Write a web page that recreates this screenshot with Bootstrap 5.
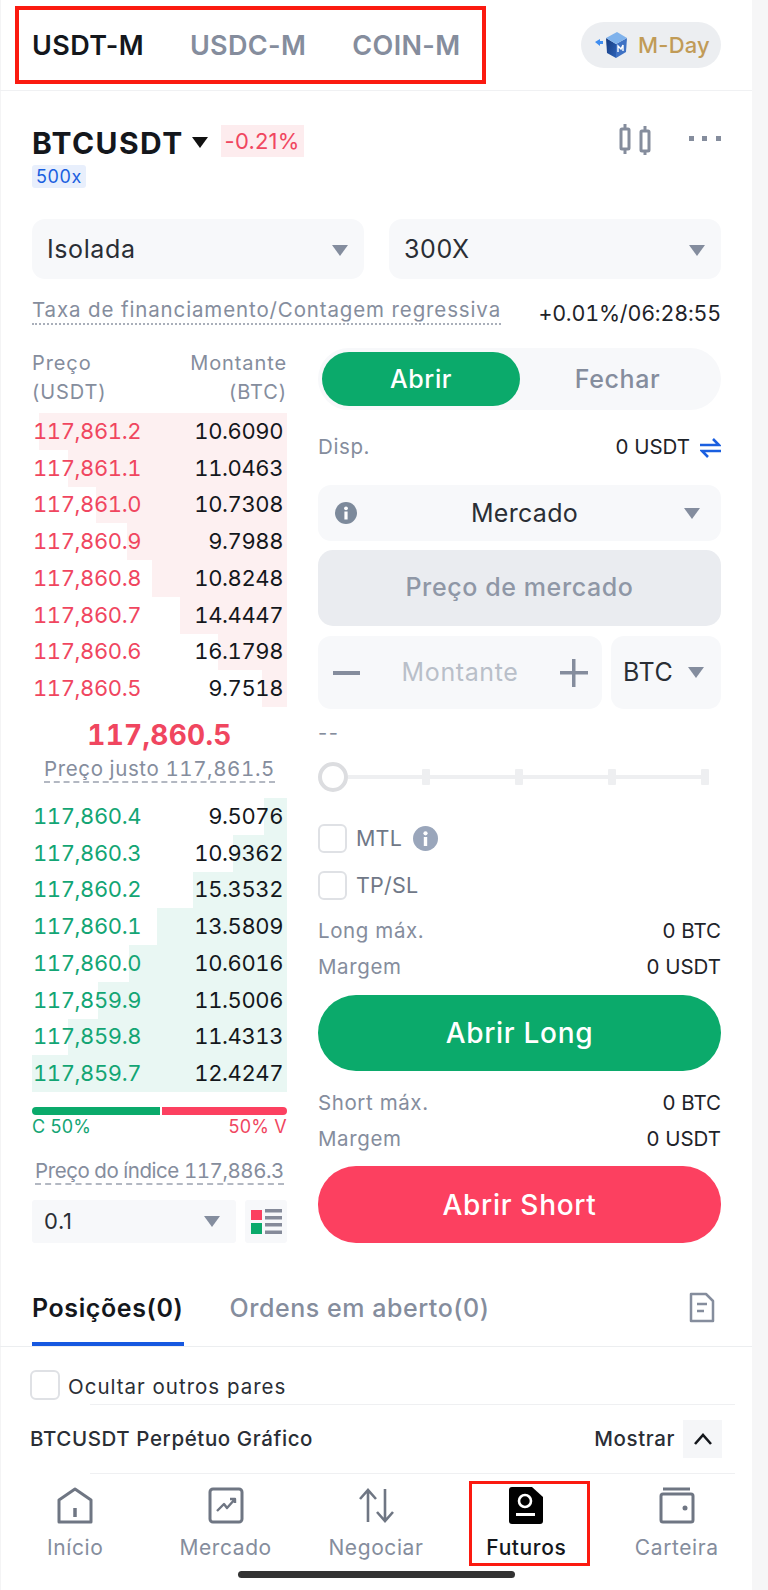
<!DOCTYPE html>
<html lang="pt">
<head>
  <meta charset="UTF-8" />
  <meta name="viewport" content="width=device-width, initial-scale=1.0"/>
  <title>Futuros</title>
  <link href="https://cdn.jsdelivr.net/npm/bootstrap@5.3.3/dist/css/bootstrap.min.css" rel="stylesheet">
  <style>
    body { background: #f6f6f7; font-family: Inter, "Noto Sans", sans-serif; color: #1e2329; margin: 0; letter-spacing: .6px; }
    .shell { width: 752px; height: 1590px; background: #fff; overflow: hidden; box-shadow: inset 1px 0 #f4f4f5; }

    .top-bar { height: 91px; border-bottom: 1px solid #f0f1f3; padding: 6px 31px 0 15px; }
    .tab-box { width: 471px; height: 78px; border: 4px solid #fb1a10; padding: 2px 0 0 13px; gap: 46px; font-size: 27px; font-weight: 600; color: #858d9d; letter-spacing: .35px; }
    .tab-box .on { color: #14171c; }
    .mday { width: 140px; height: 46px; margin-top: 16px; border-radius: 23px; background: #eceef1; color: #c19b57; font-size: 22px; font-weight: 500; padding-left: 13px; gap: 9px; letter-spacing: .2px; }

    .pad { padding: 0 31px 0 32px; }
    .sym-row { margin-top: 32px; height: 32px; }
    .sym-name { font-size: 30px; font-weight: 700; color: #14171c; letter-spacing: 1.4px; line-height: 32px; margin-top: 4px; }
    .chg { height: 32px; padding: 0 4px; margin-left: 13px; background: #fdecee; color: #f0465f; font-size: 22px; line-height: 32px; letter-spacing: .2px; }
    .lev { display: inline-block; height: 23px; margin-top: 10px; padding: 0 4px; border-radius: 3px; background: #e8effc; color: #1a5fe0; font-size: 18px; line-height: 23px; vertical-align: top; }
    .tri { display: inline-block; width: 0; height: 0; border-left: 8.5px solid transparent; border-right: 8.5px solid transparent; border-top: 11px solid #848d9e; flex: none; }
    .tri-dark { border-top-color: #111; margin-left: 8px; margin-top: 2px; }

    .field { background: #f7f8fa; border-radius: 13px; color: #2a2e35; font-size: 25px; }
    .sel-row { margin-top: 31px; gap: 25px; }
    .sel-row .field { flex: 1; height: 60px; padding: 2px 16px 0 15px; }
    .fund-row { margin-top: 18px; height: 34px; }
    .fund-lbl { color: #858d9d; border-bottom: 2px dotted #a9afba; line-height: 26px; height: 28px; margin-bottom: 6px; font-size: 20.5px; letter-spacing: .87px; }
    .fund-val { font-size: 21.5px; color: #1e2329; letter-spacing: -.2px; font-variant-numeric: tabular-nums; }

    .main-row { margin-top: 17px; gap: 31px; }
    .book { width: 255px; flex: none; }
    .book-head { height: 65px; padding-top: 1px; color: #858d9d; font-size: 20px; line-height: 29px; letter-spacing: .9px; }
    .lvl { height: 36.75px; padding: 0 4px 0 1px; font-size: 22px; letter-spacing: -.4px; font-variant-numeric: tabular-nums; background-repeat: no-repeat; background-position: right top; }
    .ask { color: #f0465f; background-image: linear-gradient(#fdf0f1, #fdf0f1); }
    .bid { color: #13a574; background-image: linear-gradient(#e9f7f3, #e9f7f3); }
    .lvl span:last-child { color: #14171c; }
    .mid-px { margin-top: 10px; height: 36px; line-height: 36px; font-size: 28px; font-weight: 700; color: #f0465f; text-align: center; letter-spacing: .3px; font-variant-numeric: tabular-nums; }
    .dash { color: #858d9d; font-size: 20.5px; line-height: 24px; height: 26px; border-bottom: 2px dashed #b3b8c2; white-space: nowrap; font-variant-numeric: tabular-nums; }
    .split-bar { margin-top: 15px; gap: 2px; height: 8px; }
    .split-bar div { height: 8px; }
    .split-bar .gr { width: 128px; background: #0baa6b; border-radius: 4px 0 0 4px; }
    .split-bar .rd { flex: 1; background: #fc4060; border-radius: 0 4px 4px 0; }
    .split-txt { height: 22px; line-height: 24px; font-size: 18px; letter-spacing: .2px; }
    .step-row { margin-top: 15px; gap: 9px; height: 43px; }
    .step-row .field { border-radius: 3px; font-size: 22px; }

    .trade { width: 403px; flex: none; }
    .toggle { height: 62px; border-radius: 31px; background: #f7f8fa; padding: 4px 0 4px 4px; font-size: 25px; font-weight: 500; color: #858d9d; }
    .toggle .opt { width: 198px; height: 54px; border-radius: 27px; background: #0baa6b; color: #fff; padding-top: 2px; }
    .kv { height: 32px; font-size: 20.5px; color: #858d9d; }
    .kv span:last-child { color: #1e2329; letter-spacing: 0; }
    .chk { width: 29px; height: 29px; border: 2.5px solid #dfe1e5; border-radius: 6px; background: #fff; flex: none; }
    .chk-lbl { font-size: 21.5px; color: #707887; margin-left: 9px; letter-spacing: .2px; }
    .big-btn { width: 100%; height: 76px; border-radius: 38px; border: 0; color: #fff; font-size: 28px; font-weight: 500; letter-spacing: .7px; }
    .slider { margin-top: 16px; height: 30px; }
    .knob { width: 30px; height: 30px; border: 4px solid #dcdde0; border-radius: 50%; background: #fff; flex: none; }
    .rail { width: 361px; height: 4px; background: #eeeff1; }
    .tick { width: 8px; height: 16px; background: #eeeff1; border-radius: 1px; }

    .pos-tabs { margin-top: 29px; height: 75px; border-bottom: 1px solid #eceef0; padding: 0 31px 0 32px; font-size: 25px; }
    .pos-tab { height: 74px; padding-top: 4px; border-bottom: 4px solid transparent; color: #858d9d; font-weight: 500; letter-spacing: .55px; }
    .pos-tab.on { color: #14171c; font-weight: 600; border-bottom-color: #1658e0; margin-right: 46px; letter-spacing: .6px; }
    .thin { height: 1px; background: #eff0f2; margin-left: 90px; width: 645px; }
    .chart-row { height: 68px; padding: 0 30px 0 30px; font-size: 20.5px; font-weight: 500; color: #2a2e35; }
    .chev { width: 39px; height: 38px; background: #f5f6f8; margin-left: 8px; }

    .tabbar { padding-top: 7px; height: 92px; }
    .tb-item { width: 20%; }
    .tb-inner { height: 85px; padding-top: 3px; font-size: 21px; color: #858d9d; border: 3px solid transparent; line-height: 1; }
    .tb-inner svg { display: block; margin-bottom: 13px; }
    .tb-inner.on { width: 121px; margin-left: 6px; padding-right: 6px; border-color: #fb1a10; color: #14171c; font-weight: 500; }
    .grabber { width: 277px; height: 7px; margin: 5px auto 0; border-radius: 4px; background: #333; }
  </style>
</head>
<body>
<div class="shell">

  <div class="top-bar d-flex justify-content-between">
    <div class="tab-box d-flex align-items-center">
      <span class="on">USDT-M</span><span>USDC-M</span><span>COIN-M</span>
    </div>
    <div class="mday d-flex align-items-center">
      <svg width="35" height="32" viewBox="0 0 35 32">
        <defs><linearGradient id="cb" x1="0" y1="0" x2="1" y2="1"><stop offset="0" stop-color="#173a7c"/><stop offset="1" stop-color="#2c62b8"/></linearGradient></defs>
        <path d="M1 13l5-3v2h3v3H6v2z" fill="#3f8df0"/>
        <path d="M12 9l10 6v14l-9-5z" fill="url(#cb)"/>
        <path d="M22 15l11-6-1 14-10 6z" fill="#3f72c4"/>
        <path d="M12 9l11-6 10 6-11 6z" fill="#7fb2ec"/>
        <path d="M24 23v-6l3 3 2-4v6" fill="none" stroke="#fff" stroke-width="1.4"/>
      </svg>
      <span>M-Day</span>
    </div>
  </div>

  <div class="pad">
    <div class="sym-row d-flex align-items-start justify-content-between">
      <div class="d-flex align-items-center">
        <span class="sym-name">BTCUSDT</span>
        <span class="tri tri-dark"></span>
        <span class="chg">-0.21%</span>
      </div>
      <div class="d-flex align-items-center" style="gap:36px">
        <svg width="34" height="32" viewBox="0 0 34 32" fill="none" stroke="#858d9d" stroke-width="3">
          <rect x="2" y="6" width="8" height="20" rx="1"/><path d="M6 1v5M6 26v5"/>
          <rect x="22" y="8" width="8" height="20" rx="1"/><path d="M26 3v5M26 28v4"/>
        </svg>
        <svg width="32" height="6" viewBox="0 0 32 6" fill="#858d9d"><rect width="5" height="5"/><rect x="13" width="5" height="5"/><rect x="27" width="5" height="5"/></svg>
      </div>
    </div>
    <span class="lev">500x</span>

    <div class="sel-row d-flex">
      <div class="field d-flex align-items-center justify-content-between">Isolada <span class="tri"></span></div>
      <div class="field d-flex align-items-center justify-content-between">300X <span class="tri"></span></div>
    </div>

    <div class="fund-row d-flex justify-content-between align-items-start">
      <span class="fund-lbl">Taxa de financiamento/Contagem regressiva</span>
      <span class="fund-val">+0.01%/06:28:55</span>
    </div>

    <div class="main-row d-flex">
      <div class="book">
        <div class="book-head d-flex justify-content-between">
          <div>Preço<br>(USDT)</div>
          <div class="text-end">Montante<br>(BTC)</div>
        </div>

        <div class="lvl ask d-flex justify-content-between align-items-center" style="background-size:248px 100%"><span>117,861.2</span><span>10.6090</span></div>
        <div class="lvl ask d-flex justify-content-between align-items-center" style="background-size:219px 100%"><span>117,861.1</span><span>11.0463</span></div>
        <div class="lvl ask d-flex justify-content-between align-items-center" style="background-size:191px 100%"><span>117,861.0</span><span>10.7308</span></div>
        <div class="lvl ask d-flex justify-content-between align-items-center" style="background-size:160px 100%"><span>117,860.9</span><span>9.7988</span></div>
        <div class="lvl ask d-flex justify-content-between align-items-center" style="background-size:135px 100%"><span>117,860.8</span><span>10.8248</span></div>
        <div class="lvl ask d-flex justify-content-between align-items-center" style="background-size:107px 100%"><span>117,860.7</span><span>14.4447</span></div>
        <div class="lvl ask d-flex justify-content-between align-items-center" style="background-size:69px 100%"><span>117,860.6</span><span>16.1798</span></div>
        <div class="lvl ask d-flex justify-content-between align-items-center" style="background-size:25px 100%"><span>117,860.5</span><span>9.7518</span></div>

        <div class="mid-px">117,860.5</div>
        <div class="d-flex justify-content-center" style="margin-top:4px;margin-bottom:15px"><span class="dash">Preço justo 117,861.5</span></div>

        <div class="lvl bid d-flex justify-content-between align-items-center" style="background-size:23px 100%"><span>117,860.4</span><span>9.5076</span></div>
        <div class="lvl bid d-flex justify-content-between align-items-center" style="background-size:54px 100%"><span>117,860.3</span><span>10.9362</span></div>
        <div class="lvl bid d-flex justify-content-between align-items-center" style="background-size:94px 100%"><span>117,860.2</span><span>15.3532</span></div>
        <div class="lvl bid d-flex justify-content-between align-items-center" style="background-size:130px 100%"><span>117,860.1</span><span>13.5809</span></div>
        <div class="lvl bid d-flex justify-content-between align-items-center" style="background-size:158px 100%"><span>117,860.0</span><span>10.6016</span></div>
        <div class="lvl bid d-flex justify-content-between align-items-center" style="background-size:189px 100%"><span>117,859.9</span><span>11.5006</span></div>
        <div class="lvl bid d-flex justify-content-between align-items-center" style="background-size:219px 100%"><span>117,859.8</span><span>11.4313</span></div>
        <div class="lvl bid d-flex justify-content-between align-items-center" style="background-size:255px 100%"><span>117,859.7</span><span>12.4247</span></div>

        <div class="split-bar d-flex"><div class="gr"></div><div class="rd"></div></div>
        <div class="split-txt d-flex justify-content-between"><span style="color:#13a574">C 50%</span><span style="color:#f0465f">50% V</span></div>
        <div class="d-flex justify-content-center" style="margin-top:22px"><span class="dash" style="letter-spacing:-.45px">Preço do índice 117,886.3</span></div>
        <div class="step-row d-flex">
          <div class="field d-flex align-items-center justify-content-between flex-fill" style="padding:0 16px 0 12px">0.1 <span class="tri"></span></div>
          <div class="field d-flex align-items-center justify-content-center" style="width:42px">
            <svg width="31" height="25" viewBox="0 0 31 25">
              <rect x="0" y="1" width="11" height="10" fill="#fc4060"/><rect x="0" y="14" width="11" height="11" fill="#0baa6b"/>
              <g fill="#858a99"><rect x="14" y="0" width="17" height="3.5"/><rect x="14" y="7" width="17" height="3.5"/><rect x="14" y="14" width="17" height="3.5"/><rect x="14" y="21.5" width="17" height="3.5"/></g>
            </svg>
          </div>
        </div>
      </div>

      <div class="trade">
        <div class="toggle d-flex align-items-center">
          <div class="opt d-flex align-items-center justify-content-center">Abrir</div>
          <div class="flex-fill text-center" style="padding:2px 6px 0 0">Fechar</div>
        </div>

        <div class="d-flex justify-content-between align-items-center" style="height:35px;margin-top:20px;font-size:20.5px;color:#858d9d">
          <span>Disp.</span>
          <span class="d-flex align-items-center" style="color:#1e2329;gap:10px;letter-spacing:0">0 USDT
            <svg width="21" height="20" viewBox="0 0 21 20" fill="none" stroke="#1a5fe0" stroke-width="2.6"><path d="M0 7h19L13 1"/><path d="M21 13H2l6 6"/></svg>
          </span>
        </div>

        <div class="field d-flex align-items-center justify-content-between" style="height:56px;margin-top:20px;padding:0 21px 0 17px">
          <svg width="22" height="22" viewBox="0 0 22 22"><circle cx="11" cy="11" r="11" fill="#7d8a9b"/><rect x="9.4" y="9.5" width="3.2" height="8" fill="#fff"/><circle cx="11" cy="6.3" r="1.9" fill="#fff"/></svg>
          <span style="margin:2px 0 0 8px;letter-spacing:.3px">Mercado</span>
          <span class="tri"></span>
        </div>

        <div class="d-flex align-items-center justify-content-center" style="height:76px;margin-top:9px;border-radius:15px;background:#eaecf0;color:#8f97a6;font-size:25px;font-weight:500">Preço de mercado</div>

        <div class="d-flex" style="height:73px;margin-top:10px;gap:9px">
          <div class="field d-flex align-items-center justify-content-between flex-fill" style="padding:0 14px 0 15px;color:#b9bfc9">
            <svg width="27" height="4" viewBox="0 0 27 4"><rect width="27" height="4" fill="#858d9d"/></svg>
            <span>Montante</span>
            <svg width="28" height="28" viewBox="0 0 28 28" fill="#858d9d"><rect y="12" width="28" height="3.5"/><rect x="12" width="3.5" height="28"/></svg>
          </div>
          <div class="field d-flex align-items-center justify-content-between" style="width:110px;padding:0 17px 0 12px;flex:none">BTC <span class="tri"></span></div>
        </div>

        <div class="d-flex align-items-center" style="height:26px;margin-top:11px;color:#858d9d;font-size:20px;letter-spacing:1.5px">--</div>

        <div class="slider d-flex align-items-center">
          <div class="knob"></div>
          <div class="rail d-flex align-items-center justify-content-between" style="padding-left:74px">
            <div class="tick"></div><div class="tick"></div><div class="tick"></div><div class="tick"></div>
          </div>
        </div>

        <div class="d-flex align-items-center" style="margin-top:32px;height:29px">
          <div class="chk"></div><span class="chk-lbl">MTL</span>
          <svg style="margin-left:11px" width="25" height="25" viewBox="0 0 25 25"><circle cx="12.5" cy="12.5" r="12.5" fill="#9aa6bb"/><rect x="10.8" y="11" width="3.4" height="9" fill="#fff"/><circle cx="12.5" cy="7.3" r="2.1" fill="#fff"/></svg>
        </div>
        <div class="d-flex align-items-center" style="margin-top:17px;height:30px">
          <div class="chk"></div><span class="chk-lbl">TP/SL</span>
        </div>

        <div class="kv d-flex justify-content-between align-items-center" style="margin-top:15px"><span>Long máx.</span><span>0 BTC</span></div>
        <div class="kv d-flex justify-content-between align-items-center" style="margin-top:4px"><span>Margem</span><span>0 USDT</span></div>
        <button class="big-btn d-block" style="margin-top:12px;background:#0baa6b">Abrir Long</button>

        <div class="kv d-flex justify-content-between align-items-center" style="margin-top:16px"><span>Short máx.</span><span>0 BTC</span></div>
        <div class="kv d-flex justify-content-between align-items-center" style="margin-top:4px"><span>Margem</span><span>0 USDT</span></div>
        <button class="big-btn d-block" style="margin-top:11px;height:77px;background:#fc4060">Abrir Short</button>
      </div>
    </div>
  </div>

  <div class="pos-tabs d-flex align-items-end">
    <div class="pos-tab on d-flex align-items-center">Posições(0)</div>
    <div class="pos-tab d-flex align-items-center">Ordens em aberto(0)</div>
    <div class="ms-auto align-self-center" style="padding:0 6px 6px 0">
      <svg width="26" height="31" viewBox="0 0 26 31" fill="none" stroke="#858d9d" stroke-width="2.5" stroke-linejoin="round"><path d="M2 2h15l7 7v20H2z"/><path d="M8 12h10M8 19h7"/></svg>
    </div>
  </div>

  <div class="d-flex align-items-start" style="height:57px;padding:23px 0 0 30px;font-size:20.5px;color:#2a2e35;letter-spacing:1px">
    <div class="chk" style="width:30px;height:30px"></div><span style="margin-left:8px;line-height:34px">Ocultar outros pares</span>
  </div>
  <div class="thin"></div>

  <div class="chart-row d-flex align-items-center justify-content-between">
    <span>BTCUSDT Perpétuo Gráfico</span>
    <div class="d-flex align-items-center">
      <span>Mostrar</span>
      <div class="chev d-flex align-items-center justify-content-center">
        <svg width="20" height="12" viewBox="0 0 20 12" fill="none" stroke="#14171c" stroke-width="2.6"><path d="M2 11l8-9 8 9"/></svg>
      </div>
    </div>
  </div>
  <div class="thin"></div>

  <div class="tabbar d-flex">
    <div class="tb-item d-flex justify-content-center">
      <div class="tb-inner d-flex flex-column align-items-center">
        <svg width="36" height="37" viewBox="0 0 36 37" fill="none" stroke="#6f7683" stroke-width="3" stroke-linejoin="round"><path d="M2 13L18 2l16 11v22H2z"/><path d="M18 21v9" stroke-width="3.5"/></svg>
        Início
      </div>
    </div>
    <div class="tb-item d-flex justify-content-center">
      <div class="tb-inner d-flex flex-column align-items-center">
        <svg width="36" height="37" viewBox="0 0 36 37" fill="none" stroke="#6f7683" stroke-width="3" stroke-linejoin="round"><rect x="2" y="2" width="32" height="33" rx="3"/><path d="M9 24l7-7 3 4 8-9M22 12h5v4" stroke-width="2.4"/></svg>
        Mercado
      </div>
    </div>
    <div class="tb-item d-flex justify-content-center">
      <div class="tb-inner d-flex flex-column align-items-center">
        <svg width="36" height="37" viewBox="0 0 36 37" fill="none" stroke="#6f7683" stroke-width="2.6"><path d="M10 35V4M2 12l8-9 8 9"/><path d="M27 2v31M19 25l8 9 8-9"/></svg>
        Negociar
      </div>
    </div>
    <div class="tb-item d-flex justify-content-center">
      <div class="tb-inner on d-flex flex-column align-items-center">
        <svg width="34" height="37" viewBox="0 0 34 37"><path d="M3 0h20l11 10v24a3 3 0 0 1-3 3H3a3 3 0 0 1-3-3V3a3 3 0 0 1 3-3z" fill="#000"/><circle cx="16" cy="14" r="6" fill="none" stroke="#fff" stroke-width="2.6"/><rect x="7" y="26" width="19" height="3" fill="#fff"/></svg>
        Futuros
      </div>
    </div>
    <div class="tb-item d-flex justify-content-center">
      <div class="tb-inner d-flex flex-column align-items-center">
        <svg width="36" height="37" viewBox="0 0 36 37" fill="none" stroke="#6f7683" stroke-width="3" stroke-linejoin="round"><path d="M4 2h27"/><rect x="2" y="7" width="32" height="28" rx="2"/><circle cx="26" cy="21" r="2.5" fill="#6f7683" stroke="none"/></svg>
        Carteira
      </div>
    </div>
  </div>
  <div class="grabber"></div>
</div>

<script src="https://cdn.jsdelivr.net/npm/bootstrap@5.3.3/dist/js/bootstrap.bundle.min.js"></script>
</body>
</html>
